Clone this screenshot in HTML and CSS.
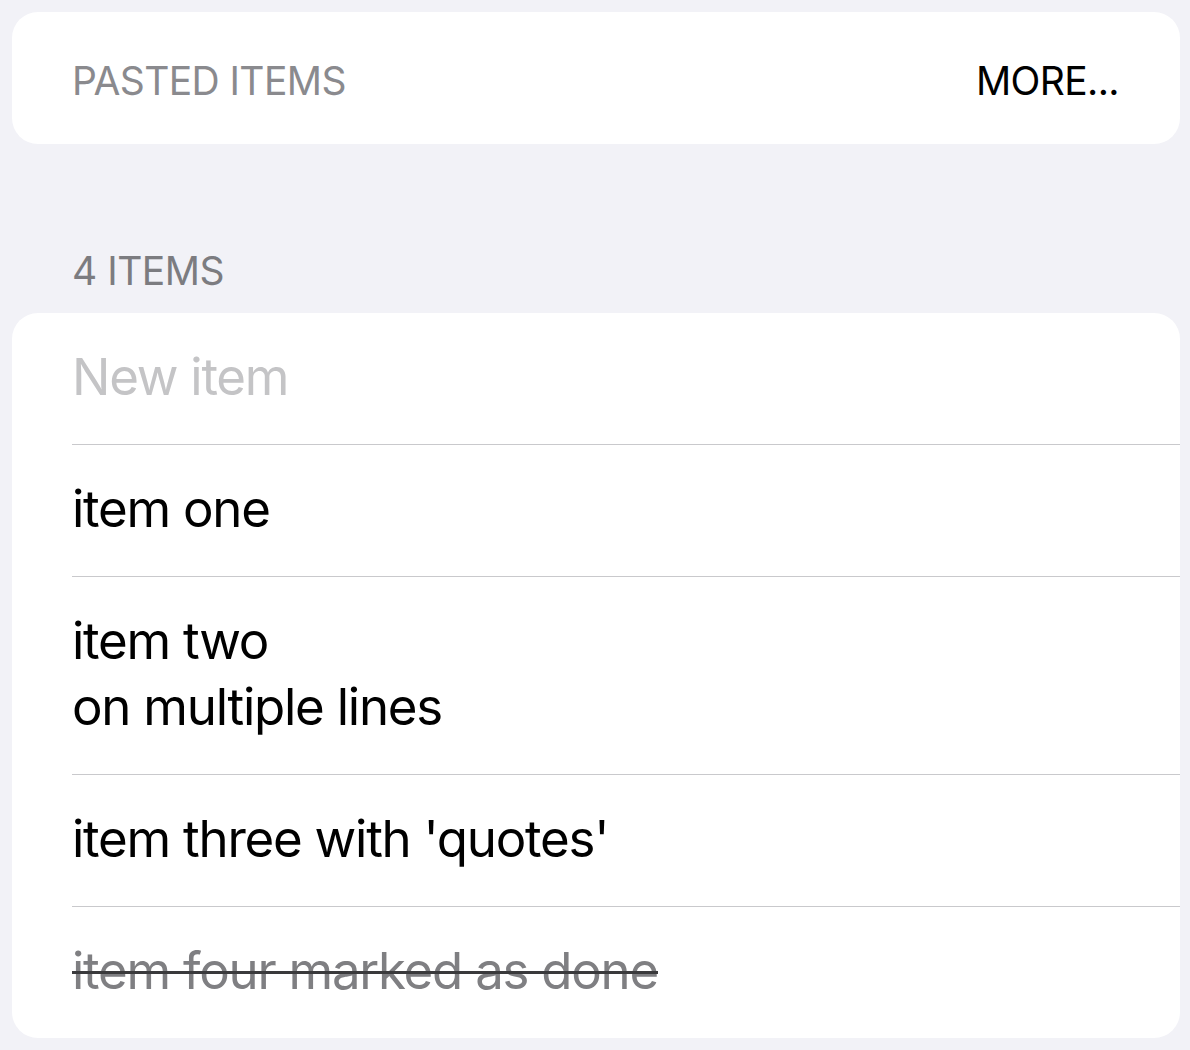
FILE: index.html
```html
<!DOCTYPE html>
<html>
<head>
<meta charset="utf-8">
<link rel="stylesheet" href="styles.css">
</head>
<body>
  <div class="card top-card">
    <span class="top-label">PASTED ITEMS</span>
    <span class="top-action">MORE...</span>
  </div>
  <div class="section-header">4 ITEMS</div>
  <div class="card list">
    <div class="row placeholder">New item</div>
    <div class="row">item one</div>
    <div class="row">item two<br>on multiple lines</div>
    <div class="row">item three with 'quotes'</div>
    <div class="row done">item four marked as done</div>
  </div>
</body>
</html>
```
FILE: styles.css
```css
html, body {
  margin: 0;
  padding: 0;
  background: #f2f2f7;
  font-family: Inter, "Liberation Sans", sans-serif;
}
.card {
  background: #ffffff;
  border-radius: 26px;
  margin: 0 10px 0 12px;
}
.top-card {
  margin-top: 12px;
  height: 132px;
  box-sizing: border-box;
  display: flex;
  align-items: center;
  justify-content: space-between;
  padding: 4px 61px 0 60px;
  font-size: 39px;
  line-height: 47px;
  letter-spacing: -0.6px;
}
.top-label {
  color: #8a8a8e;
}
.top-action {
  color: #000000;
}
.section-header {
  margin: 103px 0 19px 0;
  padding-left: 72px;
  font-size: 39px;
  line-height: 47px;
  letter-spacing: -0.5px;
  color: #7c7c80;
}
.list {
  overflow: hidden;
  margin-bottom: 12px;
}
.row {
  margin-left: 60px;
  padding: 31px 0 34px 0;
  font-size: 51px;
  line-height: 66px;
  letter-spacing: -1.25px;
  color: #000000;
  border-bottom: 1px solid #c9c9cc;
}
.row:last-child {
  border-bottom: none;
}
.placeholder {
  color: #c4c4c6;
}
.done {
  color: #7f7f82;
  text-decoration: line-through;
  text-decoration-color: #3a3a3c;
  text-decoration-thickness: 3px;
}
```
